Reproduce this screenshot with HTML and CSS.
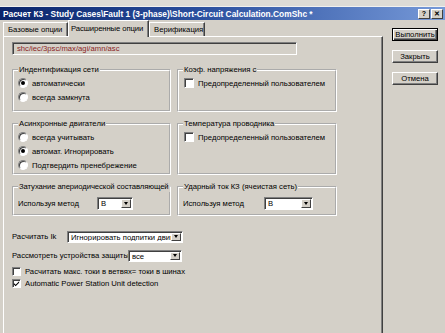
FILE: index.html
```html
<!DOCTYPE html>
<html lang="ru">
<head>
<meta charset="utf-8">
<link rel="stylesheet" href="styles.css">
</head>
<body>
<div class="win">
  <div class="topstrip"></div>
  <div class="titlebar">
    <span class="title">Расчет К3 - Study Cases\Fault 1 (3-phase)\Short-Circuit Calculation.ComShc *</span>
    <div class="tbtns"><span class="tb">?</span><span class="tb">✕</span></div>
  </div>
  <div class="main">
    <div class="left">
      <div class="tabs">
        <div class="tab t1">Базовые опции</div>
        <div class="tab t2 active">Расширенные опции</div>
        <div class="tab t3">Верификация</div>
      </div>
      <div class="panel">
        <div class="field">shc/iec/3psc/max/agi/amn/asc</div>
        <div class="groups">
          <fieldset class="grp">
            <legend>Индентификация сети</legend>
            <div class="row"><span class="radio on"></span>автоматически</div>
            <div class="row"><span class="radio"></span>всегда замкнута</div>
          </fieldset>
          <fieldset class="grp">
            <legend>Коэф. напряжения с</legend>
            <div class="row"><span class="check"></span>Предопределенный пользователем</div>
          </fieldset>
          <fieldset class="grp">
            <legend>Асинхронные двигатели</legend>
            <div class="row"><span class="radio"></span>всегда учитывать</div>
            <div class="row"><span class="radio on"></span>автомат. Игнорировать</div>
            <div class="row"><span class="radio"></span>Подтвердить пренебрежение</div>
          </fieldset>
          <fieldset class="grp">
            <legend>Температура проводника</legend>
            <div class="row"><span class="check"></span>Предопределенный пользователем</div>
          </fieldset>
          <fieldset class="grp grp-m">
            <legend class="tight">Затухание апериодической составляющей</legend>
            <div class="row"><span class="lbl lbl-m1">Используя метод</span><span class="combo combo-s1"><span class="ctext">B</span><span class="cbtn"></span></span></div>
          </fieldset>
          <fieldset class="grp grp-m">
            <legend>Ударный ток КЗ (ячеистая сеть)</legend>
            <div class="row"><span class="lbl lbl-m2">Используя метод</span><span class="combo combo-s2"><span class="ctext">B</span><span class="cbtn"></span></span></div>
          </fieldset>
        </div>
        <div class="lines">
          <div class="line"><span class="lbl lbl-ik">Расчитать Ik</span><span class="combo combo-l1"><span class="ctext">Игнорировать подпитки двигателей</span><span class="cbtn"></span></span></div>
          <div class="line"><span class="lbl lbl-prot">Рассмотреть устройства защиты</span><span class="combo combo-l2"><span class="ctext">все</span><span class="cbtn"></span></span></div>
          <div class="cline first"><span class="check"></span>Расчитать макс. токи в ветвях= токи в шинах</div>
          <div class="cline"><span class="check on"><svg viewBox="0 0 8 8" width="7" height="7"><path d="M1 3.5 L3 5.5 L7 1.5 L7 3 L3 7 L1 5 Z" fill="#000"/></svg></span>Automatic Power Station Unit detection</div>
        </div>
      </div>
    </div>
    <div class="right">
      <div class="btn default">Выполнить</div>
      <div class="btn">Закрыть</div>
      <div class="btn">Отмена</div>
    </div>
  </div>
</div>
</body>
</html>
```

FILE: styles.css
```css
* { box-sizing: border-box; margin: 0; padding: 0; }
html, body { width: 445px; height: 333px; overflow: hidden; }
body {
  background: #d4d0c8;
  font-family: "Liberation Sans", Arial, sans-serif;
  font-size: 7.7px;
  color: #000;
}
.win { display: flex; flex-direction: column; height: 333px; }
.topstrip { height: 7px; background: #dddbd6; border-bottom: 1px solid #f2f1ee; }
.titlebar {
  height: 13px;
  background: linear-gradient(to right, #0a246a 0%, #2a4f9e 45%, #7699d8 100%);
  display: flex; align-items: center; justify-content: space-between;
  padding: 0 2px 0 3px;
}
.title { color: #fff; font-weight: bold; font-size: 8.4px; white-space: nowrap; }
.tbtns { display: flex; gap: 1px; }
.tb {
  width: 12px; height: 10px; background: #d4d0c8;
  border: 1px solid; border-color: #fff #404040 #404040 #fff;
  font-size: 7px; font-weight: bold; display: flex; align-items: center; justify-content: center; line-height: 1;
}
.main { flex: 1; display: flex; min-height: 0; }
.left { width: 383px; display: flex; flex-direction: column; }
.tabs { height: 16px; display: flex; align-items: flex-end; padding-left: 3px; position: relative; z-index: 1; }
.tab {
  height: 14px; display: flex; align-items: center; padding-left: 4px; white-space: nowrap; overflow: hidden;
  border: 1px solid; border-color: #fff #404040 transparent #fff; border-bottom: 0;
  box-shadow: inset -1px 0 #808080;
}
.t1 { width: 65px; }
.t2 { width: 81px; }
.t3 { width: 56px; }
.tab.active { height: 17px; margin-bottom: -1px; background: #d4d0c8; padding-bottom: 2px; padding-left: 2px; letter-spacing: -0.1px; }
.panel {
  flex: 1; margin-left: 3px;
  border-top: 1px solid #fff; border-left: 1px solid #fff; border-right: 1px solid #404040;
  box-shadow: inset -1px 0 #808080;
  padding: 5px 0 0 8px;
}
.field {
  width: 285px; height: 13px;
  border: 1px solid; border-color: #808080 #fff #fff #808080;
  box-shadow: inset 1px 1px 0 #404040;
  color: #8b1f1f; padding-left: 4px; line-height: 11px;
}
.groups {
  margin-top: 10px;
  display: grid;
  grid-template-columns: 159px 160px;
  grid-template-rows: 47px 56px 34px;
  column-gap: 6px;
  row-gap: 7px;
}
.grp {
  border: 2px groove #fff;
  padding: 1px 4px 0 4px;
  min-width: 0;
}
.grp legend { padding: 0 1px; line-height: 10px; height: 10px; white-space: nowrap; }
.grp legend.tight { letter-spacing: -0.08px; }
.grp-m { padding-top: 4px; }
.row { height: 14px; display: flex; align-items: center; white-space: nowrap; }
.radio {
  width: 10px; height: 10px; border-radius: 50%; background: #fff; flex: none;
  border: 1px solid; border-color: #808080 #fff #fff #808080;
  box-shadow: inset 1px 1px 0 #404040;
  margin-right: 4px;
}
.radio.on::after { content: ""; display: block; width: 4px; height: 4px; border-radius: 50%; background: #000; margin: 2px; }
.check {
  width: 10px; height: 10px; background: #fff; flex: none;
  border: 1px solid; border-color: #808080 #fff #fff #808080;
  box-shadow: inset 1px 1px 0 #404040;
  margin: 0 4px 0 1px;
  display: flex; align-items: center; justify-content: center;
}
.check svg { display: block; }
.lbl { white-space: nowrap; overflow: hidden; flex: none; }
.lbl-m1 { width: 79px; }
.lbl-m2 { width: 81px; }
.combo {
  height: 13px; display: flex; background: #fff; flex: none;
  border: 1px solid; border-color: #808080 #fff #fff #808080;
  box-shadow: inset 1px 1px 0 #404040;
  padding: 1px;
}
.combo-s1 { width: 36px; }
.combo-s2 { width: 49px; }
.combo-l1 { width: 116px; height: 12px; }
.combo-l2 { width: 54px; height: 12px; }
.ctext { flex: 1; min-width: 0; overflow: hidden; white-space: nowrap; padding-left: 2px; line-height: 10px; }
.combo-l1 .ctext, .combo-l2 .ctext { line-height: 9px; }
.cbtn {
  width: 10px; flex: none; background: #d4d0c8;
  border: 1px solid; border-color: #fff #404040 #404040 #fff;
  display: flex; align-items: center; justify-content: center;
}
.cbtn::after { content: ""; border-left: 2.5px solid transparent; border-right: 2.5px solid transparent; border-top: 3px solid #000; }
.lines { margin-top: 14px; }
.line { height: 13px; display: flex; align-items: center; margin-bottom: 6px; }
.lbl-ik { width: 55px; }
.lbl-prot { width: 116px; }
.cline { height: 12px; display: flex; align-items: center; white-space: nowrap; }
.cline .check { width: 9px; height: 9px; margin: 0 4px 0 0; }
.cline.first { margin-top: -3px; }
.right { flex: 1; padding: 8px 0 0 9px; display: flex; flex-direction: column; gap: 9px; }
.btn {
  width: 46px; height: 13px; display: flex; align-items: center; justify-content: center;
  border: 1px solid; border-color: #fff #404040 #404040 #fff;
  box-shadow: inset -1px -1px 0 #808080;
}
.btn.default { border: 1px solid #000; box-shadow: inset 1px 1px 0 #fff, inset -1px -1px 0 #404040, inset -2px -2px 0 #808080; }
```
